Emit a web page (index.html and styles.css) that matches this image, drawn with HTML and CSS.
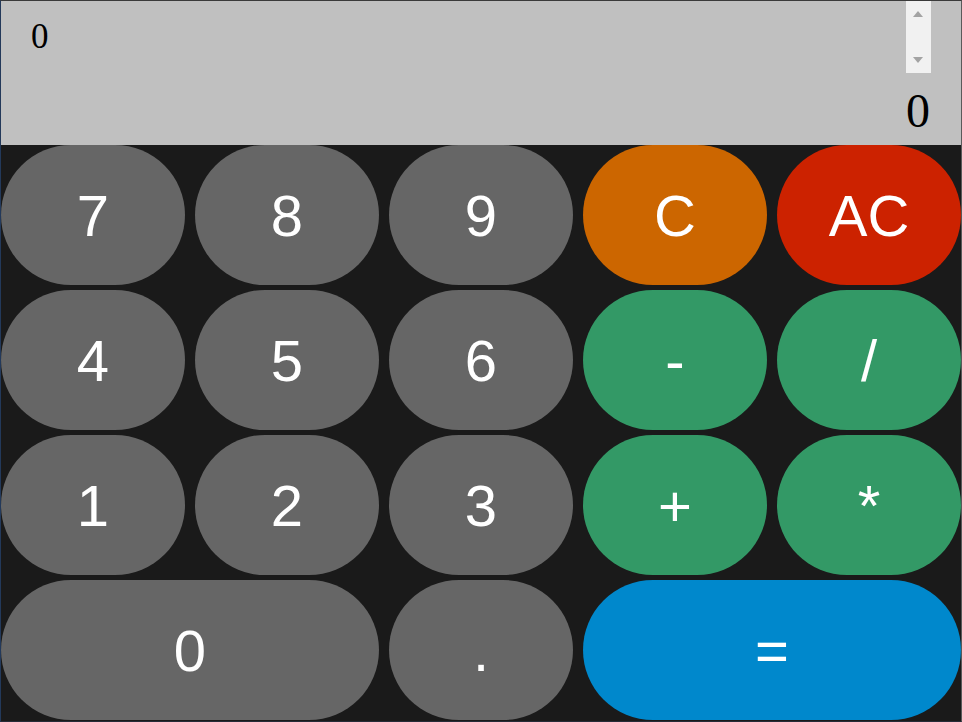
FILE: index.html
```html
<!DOCTYPE html>
<html lang="en">
<head>
<meta charset="utf-8">
<title>Calculator</title>
<link rel="stylesheet" href="styles.css">
</head>
<body>
<div class="app">
  <div class="display">
    <div class="history">0</div>
    <div class="scrollbar" aria-hidden="true">
      <span class="arrow up"></span>
      <span class="arrow down"></span>
    </div>
    <div class="current">0</div>
  </div>
  <div class="keys">
    <button class="key num">7</button>
    <button class="key num">8</button>
    <button class="key num">9</button>
    <button class="key clear">C</button>
    <button class="key allclear">AC</button>
    <button class="key num">4</button>
    <button class="key num">5</button>
    <button class="key num">6</button>
    <button class="key op">-</button>
    <button class="key op">/</button>
    <button class="key num">1</button>
    <button class="key num">2</button>
    <button class="key num">3</button>
    <button class="key op">+</button>
    <button class="key op">*</button>
    <button class="key num wide">0</button>
    <button class="key num">.</button>
    <button class="key equals wide">=</button>
  </div>
</div>
</body>
</html>
```

FILE: styles.css
```css
* { box-sizing: border-box; }
html, body { margin: 0; padding: 0; }
body { background: #1a1a1a; }

.app {
  width: 962px;
  height: 722px;
  display: flex;
  flex-direction: column;
  background: #1a1a1a;
  border-top: 1px solid #3a3a3a;
  border-left: 1px solid #23395a;
  border-right: 1px solid #5a5a5a;
  border-bottom: 1px solid #262c38;
}

.display {
  position: relative;
  height: 144px;
  flex: none;
  background: #c0c0c0;
  display: flex;
  flex-direction: column;
  padding: 18px 31px 10px 30px;
  font-family: "Liberation Serif", "Times New Roman", serif;
  color: #000;
}

.history {
  font-size: 35px;
  line-height: 1;
}

.current {
  margin-top: auto;
  text-align: right;
  font-size: 48px;
  line-height: 1;
}

.scrollbar {
  position: absolute;
  top: 0;
  right: 30px;
  width: 25px;
  height: 72px;
  background: #f1f1f1;
}

.arrow {
  position: absolute;
  left: 7px;
  width: 0;
  height: 0;
  border-left: 5.5px solid transparent;
  border-right: 5.5px solid transparent;
}
.arrow.up { top: 10px; border-bottom: 6px solid #a3a3a3; }
.arrow.down { top: 56px; border-top: 6px solid #a3a3a3; }

.keys {
  flex: 1;
  display: grid;
  grid-template-columns: repeat(5, 184px);
  grid-template-rows: repeat(4, 140px);
  column-gap: 10px;
  row-gap: 5px;
  align-content: start;
}

.key {
  border: none;
  margin: 0;
  padding: 0;
  border-radius: 70px;
  color: #fff;
  font-family: "Liberation Sans", Arial, sans-serif;
  font-size: 58px;
  display: flex;
  align-items: center;
  justify-content: center;
  cursor: pointer;
}

.key.wide { grid-column: span 2; }
.num { background: #666666; }
.clear { background: #cc6600; }
.allclear { background: #cc2200; }
.op { background: #339966; }
.equals { background: #0088cc; }
```
